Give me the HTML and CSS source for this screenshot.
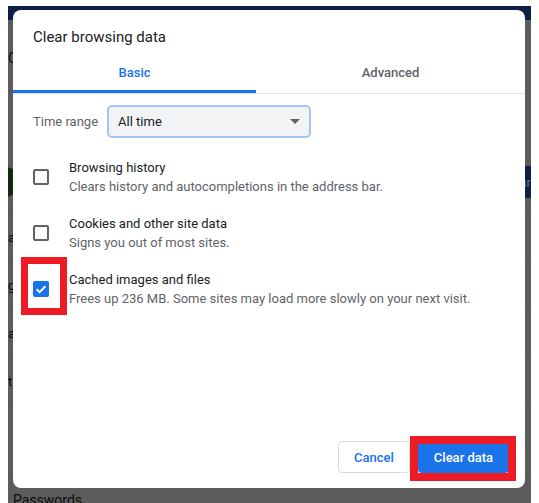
FILE: index.html
```html
<!DOCTYPE html>
<html lang="en">
<head>
<meta charset="utf-8">
<title>Clear browsing data</title>
<link rel="stylesheet" href="styles.css">
</head>
<body>
<div class="screen">
  <div class="topbar"></div>
  <div class="page">
    <div class="intro">
      <div class="heading">C</div>
      <div class="account">
        <span class="avatar"></span>
        <span class="navy-btn"><span class="navy-text">ar</span></span>
      </div>
    </div>
    <div class="prow"><span class="ptext">ar</span></div>
    <div class="prow"><span class="ptext">g</span></div>
    <div class="prow"><span class="ptext">a</span></div>
    <div class="prow"><span class="ptext">t</span></div>
    <div class="prow tall"></div>
    <div class="prow last"><span class="ptext pw">Passwords</span></div>
  </div>

  <div class="dialog">
    <div class="title">Clear browsing data</div>
    <div class="tabs">
      <div class="tab active">Basic</div>
      <div class="tab">Advanced</div>
    </div>
    <div class="range">
      <span class="range-label">Time range</span>
      <div class="select">
        <span>All time</span>
        <span class="caret"></span>
      </div>
    </div>
    <div class="options">
      <div class="option">
        <span class="checkbox"></span>
        <div class="option-text">
          <div class="option-title">Browsing history</div>
          <div class="option-sub">Clears history and autocompletions in the address bar.</div>
        </div>
      </div>
      <div class="option">
        <span class="checkbox"></span>
        <div class="option-text">
          <div class="option-title">Cookies and other site data</div>
          <div class="option-sub">Signs you out of most sites.</div>
        </div>
      </div>
      <div class="option marked">
        <span class="checkbox checked">
          <svg viewBox="0 0 16 16" width="16" height="16"><path d="M3.6 8.2 L6.6 11.1 L12.4 5.2" fill="none" stroke="#fff" stroke-width="2"/></svg>
        </span>
        <div class="option-text">
          <div class="option-title">Cached images and files</div>
          <div class="option-sub">Frees up 236 MB. Some sites may load more slowly on your next visit.</div>
        </div>
        <span class="redbox check-mark"></span>
      </div>
    </div>
    <div class="footer">
      <button class="btn cancel">Cancel</button>
      <div class="primary-wrap">
        <button class="btn primary">Clear data</button>
        <span class="redbox btn-mark"></span>
      </div>
    </div>
  </div>
</div>
</body>
</html>
```

FILE: styles.css
```css
* { box-sizing: border-box; }

body {
  margin: 0;
  background: #ffffff;
  font-family: Roboto, "Liberation Sans", Arial, sans-serif;
}

.screen {
  position: relative;
  margin: 6px 8px 0 8px;
  width: 523px;
  height: 497px;
  background: #5c5c5c;
  overflow: hidden;
}

.topbar {
  height: 14px;
  background: #0e1f47;
}

.page {
  display: flex;
  flex-direction: column;
}

.intro {
  height: 193px;
  display: flex;
  flex-direction: column;
}

.heading {
  margin-top: 28px;
  font-size: 15px;
  line-height: 20px;
  color: #0c0c0c;
}

.account {
  margin-top: auto;
  margin-bottom: 14px;
  height: 34px;
  display: flex;
  align-items: center;
  justify-content: space-between;
}

.avatar {
  width: 30px;
  height: 30px;
  border-radius: 50%;
  background: #132a10;
  margin-left: -18px;
}

.navy-btn {
  height: 32px;
  width: 14px;
  background: #0e1f47;
  display: flex;
  align-items: center;
  justify-content: flex-end;
}

.navy-text {
  font-size: 13px;
  color: #6f6f78;
  white-space: nowrap;
}

.prow {
  height: 48px;
  border-top: 1px solid #545454;
  display: flex;
  align-items: center;
  font-size: 13px;
  color: #0c0c0c;
  white-space: nowrap;
}

.prow.tall { height: 67px; }
.prow.last { align-items: flex-start; }

.ptext { display: block; }
.pw { margin-left: 5px; margin-top: 19px; font-size: 14px; line-height: 16px; }

/* dialog */
.dialog {
  position: absolute;
  left: 5px;
  top: 4px;
  width: 512px;
  height: 478px;
  background: #ffffff;
  border-radius: 8px;
  display: flex;
  flex-direction: column;
  color: #202124;
}

.title {
  padding: 17px 20px 0;
  font-size: 15px;
  line-height: 20px;
  color: #202124;
}

.tabs {
  display: grid;
  grid-template-columns: 243px 1fr;
  border-bottom: 1px solid #e0e0e0;
}

.tab {
  height: 46px;
  padding-top: 16px;
  line-height: 20px;
  text-align: center;
  font-size: 13px;
  font-weight: 500;
  color: #5f6368;
  border-bottom: 3px solid transparent;
}

.tab.active {
  color: #1a73e8;
  border-bottom-color: #1a73e8;
}

.range {
  display: flex;
  align-items: center;
  gap: 9px;
  padding: 11px 20px 0;
}

.range-label {
  font-size: 13px;
  color: #5f6368;
  white-space: nowrap;
}

.select {
  width: 204px;
  height: 33px;
  border: 2px solid #a3c3fa;
  border-radius: 5px;
  background: #f1f3f4;
  display: flex;
  align-items: center;
  justify-content: space-between;
  padding: 0 9px 0 9px;
  font-size: 13px;
  color: #202124;
}

.caret {
  width: 0;
  height: 0;
  border-left: 5px solid transparent;
  border-right: 5px solid transparent;
  border-top: 5px solid #5f6368;
}

.options {
  margin-top: 11px;
  display: flex;
  flex-direction: column;
}

.option {
  position: relative;
  display: flex;
  align-items: center;
  gap: 20px;
  padding: 9px 20px;
}

.checkbox {
  flex: none;
  width: 16px;
  height: 16px;
  border: 2px solid #5f6368;
  border-radius: 2px;
  display: flex;
}

.checkbox.checked {
  border: none;
  background: #1a73e8;
}

.option-title {
  font-size: 13px;
  line-height: 19px;
  color: #202124;
}

.option-sub {
  font-size: 13px;
  line-height: 19px;
  color: #5f6368;
}

.redbox {
  position: absolute;
  border: 7px solid #ed1c24;
}

.check-mark {
  left: 8px;
  top: -4px;
  width: 46px;
  height: 58px;
}

.footer {
  margin-top: auto;
  display: flex;
  justify-content: flex-end;
  align-items: flex-end;
  gap: 8px;
  padding: 0 16px 15px 0;
}

.btn {
  font-family: Roboto, "Liberation Sans", Arial, sans-serif;
  font-size: 13px;
  font-weight: 500;
  height: 32px;
  border-radius: 4px;
  cursor: pointer;
}

.cancel {
  width: 72px;
  background: #ffffff;
  color: #1a73e8;
  border: 1px solid #dadce0;
}

.primary-wrap {
  position: relative;
  display: flex;
}

.primary {
  width: 91px;
  background: #1a73e8;
  color: #ffffff;
  border: none;
}

.btn-mark {
  left: -8px;
  top: -5px;
  width: 106px;
  height: 45px;
  border-width: 8px;
}
```
